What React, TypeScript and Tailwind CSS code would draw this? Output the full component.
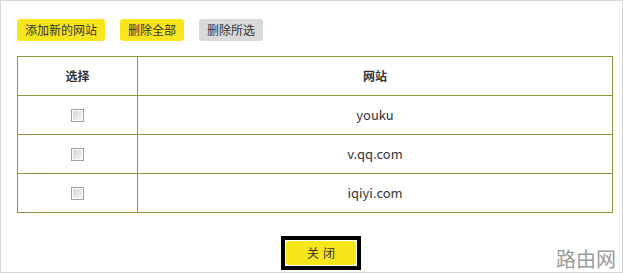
import React from 'react';

const sites = ['youku', 'v.qq.com', 'iqiyi.com'];

function Checkbox() {
  return (
    <span className="inline-block h-[13px] w-[13px] border border-[#a0a0a0] bg-gradient-to-br from-[#d4d4d4] to-[#f8f8f8] shadow-[inset_0_0_0_1px_#fff]" />
  );
}

export default function App() {
  return (
    <div
      className="relative h-[273px] w-[623px] border-l border-r border-b border-t border-[#d6d6d6] bg-white text-[13px] text-[#333]"
      style={{ fontFamily: '"Noto Sans CJK SC", "Noto Sans", sans-serif' }}
    >
      <div className="flex gap-[15px] pl-[16px] pt-[18px] text-[12px]">
        <button className="h-[22px] rounded-[3px] bg-[#f8e51b] px-[8px] leading-[22px]">添加新的网站</button>
        <button className="h-[22px] rounded-[3px] bg-[#f8e51b] px-[8px] leading-[22px]">删除全部</button>
        <button className="h-[22px] rounded-[3px] bg-[#d9d9d9] px-[8px] leading-[22px]">删除所选</button>
      </div>

      <table className="ml-[16px] mt-[15px] w-[596px] border-collapse">
        <thead>
          <tr className="h-[39px] text-[12px]">
            <th className="w-[120px] border border-[#8a9a3b] font-bold">选择</th>
            <th className="border border-[#8a9a3b] font-bold">网站</th>
          </tr>
        </thead>
        <tbody>
          {sites.map((s) => (
            <tr key={s} className="h-[39px]">
              <td className="border border-[#8a9a3b] text-center">
                <div className="flex justify-center">
                  <Checkbox />
                </div>
              </td>
              <td className="border border-[#8a9a3b] text-center">{s}</td>
            </tr>
          ))}
        </tbody>
      </table>

      <div className="mt-[23px] flex justify-center pl-[19px]">
        <div className="border-[4px] border-black p-[1px]">
          <button className="h-[24px] w-[70px] rounded-[3px] bg-[#f8e51b] pl-[4px] text-[12px] tracking-[4px]">关闭</button>
        </div>
      </div>

      <span className="absolute bottom-[3px] right-[6px] text-[20px] leading-none text-[#9a9a9a]">路由网</span>
    </div>
  );
}
